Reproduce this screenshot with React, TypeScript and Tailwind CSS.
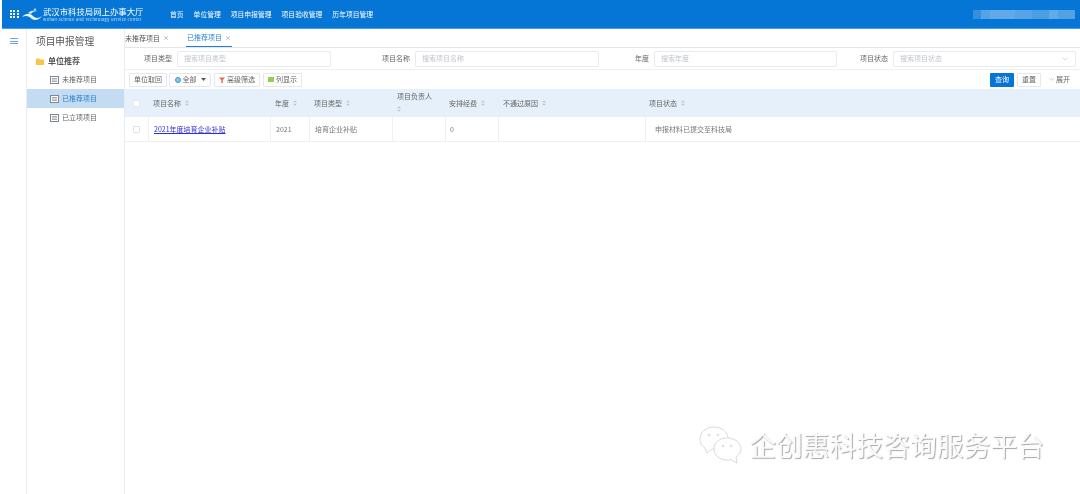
import { ChevronDown, X } from 'lucide-react'

const font = { fontFamily: '"Noto Sans CJK SC", "Liberation Sans", sans-serif' }

const nav = ['首页', '单位管理', '项目申报管理', '项目验收管理', '历年项目管理']
const filters = [
  { label: '项目类型', hint: '搜索项目类型', labelW: 'w-[47px]', inputW: 'w-[154px]' },
  { label: '项目名称', hint: '搜索项目名称', labelW: 'w-[79px]', inputW: 'w-[184px]' },
  { label: '年度', hint: '搜索年度', labelW: 'w-[50px]', inputW: 'w-[183px]' },
]
const columns = 'grid grid-cols-[23px_122px_39px_83px_53px_53px_147px_431px]'

function Sort() {
  return (
    <svg width="4" height="6" viewBox="0 0 5 7" className="ml-[4px] inline-block text-[#c0c7d0]">
      <path d="M2.5 0 L5 2.6 H0 Z M2.5 7 L0 4.4 H5 Z" fill="currentColor" />
    </svg>
  )
}

function DocIcon() {
  return (
    <svg width="9" height="8" viewBox="0 0 9 8" className="shrink-0">
      <rect x="0.5" y="0.5" width="8" height="7" fill="#fff" stroke="#7d8790" />
      <path d="M2 2.5H7M2 4H7M2 5.5H7" stroke="#8d969e" strokeWidth="0.8" />
    </svg>
  )
}

function WeChat() {
  return (
    <svg width="44" height="38" viewBox="0 0 44 38" fill="#fff" stroke="#cfcfcf" strokeWidth="0.8">
      <path d="M15 1C7 1 1 6 1 13c0 4 2 7 5 9l2 5 5-4c2 0 3 .3 5 0 2-4 7-8 12-8C29 6 23 1 15 1Z" />
      <path d="M28 12c-8 0-13 5-13 11s5 11 13 11c2 0 3 0 4-.5l6 3.500-1-6c3-2 5-5 5-8 0-6-6-11-14-11Z" />
      <circle cx="10" cy="9" r="1" fill="#fff" />
      <circle cx="19" cy="9" r="1" fill="#fff" />
      <circle cx="24" cy="20" r="0.900" fill="#fff" />
      <circle cx="32" cy="20" r="0.900" fill="#fff" />
    </svg>
  )
}

function Header() {
  return (
    <header className="flex h-[29px] shrink-0 items-center border-b border-[#4a9fe6] bg-[#0676d6] pl-[8px] text-white">
      <div className="grid w-[9px] grid-cols-3 gap-[1px]">
        {Array.from({ length: 9 }).map((_, i) => (
          <span key={i} className="h-[2px] w-[2px] bg-white" />
        ))}
      </div>
      <svg width="20" height="12" viewBox="0 0 20 12" className="ml-[3px]">
        <path d="M0 9C4 5 8 5 11 8c2 2 5 3 9 0-3 4-7 5-10 3C7 8 4 7 0 9Z" fill="#e8f3fc" />
        <path d="M6 5c3-3 6-3 10-2-3 0-6 1-7 3Z" fill="#cfe6f8" />
        <circle cx="13" cy="1.500" r="1" fill="#e8f3fc" />
      </svg>
      <div className="ml-[1px] flex w-[100px] flex-col leading-none">
        <span className="text-[8.400px] leading-[11px] whitespace-nowrap">武汉市科技局网上办事大厅</span>
        <span className="text-[3.800px] leading-[5px] tracking-[0.38px] whitespace-nowrap text-[#cfe4f7]">Wuhan Science and Technology Service Center</span>
      </div>
      <nav className="ml-[27px] flex gap-[10px] text-[6.800px] whitespace-nowrap">
        {nav.map((n) => (
          <span key={n}>{n}</span>
        ))}
      </nav>
      <div className="mr-[5px] ml-auto flex h-[9px] w-[102px] opacity-80">
        <span className="w-[8px] bg-[#3f97e2]" />
        <span className="w-[9px] bg-[#69ade8]" />
        <span className="w-[25px] bg-[#7ab8ec]" />
        <span className="w-[17px] bg-[#6cafe9]" />
        <span className="w-[17px] bg-[#5ea8e7]" />
        <span className="w-[9px] bg-[#7ab8ec]" />
        <span className="w-[17px] bg-[#66ace8]" />
      </div>
    </header>
  )
}

function Sidebar() {
  const items = ['未推荐项目', '已推荐项目', '已立项项目']
  return (
    <aside className="w-[98px] shrink-0 border-r border-[#e8edf2]">
      <div className="pt-[5px] pl-[9px] text-[9.700px] leading-[14px] text-[#555]">项目申报管理</div>
      <div className="mt-[6px] flex h-[14px] items-center gap-[4px] pl-[9px] text-[8px] font-bold text-[#555]">
        <svg width="8" height="7" viewBox="0 0 8 7">
          <path d="M0 1a.6.6 0 0 1 .6-.6H3L4 1.400h3.400A.6.6 0 0 1 8 2v4.400a.6.6 0 0 1-.6.6H.6A.6.6 0 0 1 0 6.400Z" fill="#f8c642" />
        </svg>
        单位推荐
      </div>
      <ul className="mt-[2px] text-[7px]">
        {items.map((t, i) => (
          <li
            key={t}
            className={`flex h-[19px] items-center gap-[3px] pl-[23px] ${i === 1 ? 'bg-[#c3dcf2] text-[#2a7fd0]' : 'text-[#666]'}`}
          >
            <DocIcon />
            {t}
          </li>
        ))}
      </ul>
    </aside>
  )
}

function Tabs() {
  return (
    <div className="flex h-[19px] items-center border-b border-[#e3e6ea] text-[7px]">
      <span className="flex h-full items-center gap-[3px] text-[#555]">
        未推荐项目 <X size={6} className="text-[#888]" />
      </span>
      <span className="ml-[17px] flex h-full items-center gap-[3px] border-b border-[#1f80d8] px-[1px] text-[#2a85d8]">
        已推荐项目 <X size={6} className="text-[#888]" />
      </span>
    </div>
  )
}

function Filters() {
  return (
    <div className="flex h-[22px] items-center border-b border-[#eef0f3] text-[7px] text-[#666]">
      {filters.map((f) => (
        <div key={f.label} className="flex items-center">
          <span className={`${f.labelW} text-right`}>{f.label}</span>
          <div className={`${f.inputW} ml-[5px] flex h-[16px] items-center rounded-[2px] border border-[#e8ebf0] pl-[6px] text-[#c0c4cc]`}>
            {f.hint}
          </div>
        </div>
      ))}
      <span className="w-[51px] text-right">项目状态</span>
      <div className="ml-[5px] flex h-[16px] w-[183px] items-center justify-between rounded-[2px] border border-[#e8ebf0] px-[6px] text-[#c0c4cc]">
        搜索项目状态
        <ChevronDown size={8} className="text-[#c2c6cc]" />
      </div>
    </div>
  )
}

function Toolbar() {
  const btn = 'flex h-[14px] items-center justify-center border border-[#e6e8ec] rounded-[1px]'
  return (
    <div className="flex h-[19px] items-center text-[7px] text-[#666]">
      <div className="ml-[4px] flex gap-[3px]">
        <span className={`${btn} mr-[-1px] w-[38px]`}>单位取回</span>
        <span className={`${btn} w-[42px] gap-[2px]`}>
          <span className="h-[6px] w-[6px] rounded-full border border-[#3a9ad9] bg-[#8cc6ea]" />
          全部
          <svg width="5" height="3" viewBox="0 0 5 3" className="ml-[2px]">
            <path d="M0 0H5L2.500 3Z" fill="#555" />
          </svg>
        </span>
        <span className={`${btn} w-[46px] gap-[2px]`}>
          <svg width="6" height="6" viewBox="0 0 6 6">
            <path d="M0 .5H6L3.800 3V6H2.400V3Z" fill="#e8683c" />
          </svg>
          高级筛选
        </span>
        <span className={`${btn} w-[39px] gap-[2px]`}>
          <span className="h-[5px] w-[6px] bg-[#8fd04f]" />
          列显示
        </span>
      </div>
      <div className="mr-[10px] ml-auto flex items-center gap-[3px]">
        <span className="flex h-[14px] w-[24px] items-center justify-center rounded-[1px] bg-[#0676d6] text-white">查询</span>
        <span className={`${btn} w-[24px]`}>重置</span>
        <span className="ml-[4px] flex items-center gap-[1px]">
          <ChevronDown size={7} className="text-[#aaa]" />
          展开
        </span>
      </div>
    </div>
  )
}

function Table() {
  const heads = ['项目名称', '年度', '项目类型']
  return (
    <div className="text-[7px] text-[#666]">
      <div className={`${columns} h-[28px] items-center bg-[#e5f0fa]`}>
        <span className="ml-[8px] h-[7px] w-[7px] rounded-[1px] border border-[#e4e8ee] bg-white" />
        {heads.map((h) => (
          <span key={h} className="flex items-center pl-[5px]">
            {h}
            <Sort />
          </span>
        ))}
        <span className="self-start pt-[1px] pl-[5px] leading-[12px]">
          项目负责人
          <br />
          <span className="-ml-[4px]">
            <Sort />
          </span>
        </span>
        <span className="flex items-center pl-[4px]">
          安排经费
          <Sort />
        </span>
        <span className="flex items-center pl-[5px]">
          不通过原因
          <Sort />
        </span>
        <span className="flex items-center pl-[4px]">
          项目状态
          <Sort />
        </span>
      </div>
      <div className={`${columns} h-[25px] items-stretch border-b border-[#eef0f3] text-[#777] [&>*]:flex [&>*]:items-center`}>
        <span className="pl-[8px]">
          <span className="h-[7px] w-[7px] rounded-[1px] border border-[#e0e3e8]" />
        </span>
        <span className="border-l border-[#eef0f3] pl-[5px] text-[#2f2fd8] underline">2021年度培育企业补贴</span>
        <span className="border-l border-[#eef0f3] pl-[5px]">2021</span>
        <span className="border-l border-[#eef0f3] pl-[5px]">培育企业补贴</span>
        <span className="border-l border-[#eef0f3]" />
        <span className="border-l border-[#eef0f3] pl-[4px]">0</span>
        <span className="border-l border-[#eef0f3]" />
        <span className="border-l border-[#eef0f3] pl-[9px]">申报材料已提交至科技局</span>
      </div>
    </div>
  )
}

export default function App() {
  return (
    <div style={font} className="relative flex h-[494px] w-[1080px] flex-col overflow-hidden bg-white pl-[2px] blur-[0.3px]">
      <Header />
      <div className="flex min-h-0 flex-1">
        <div className="flex w-[25px] shrink-0 justify-center border-r border-[#e8edf2] pt-[9px] pr-[1px]">
          <div className="flex h-[6px] w-[8px] flex-col justify-between">
            <span className="h-[1px] bg-[#6ea8de]" />
            <span className="h-[1px] bg-[#6ea8de]" />
            <span className="h-[1px] bg-[#6ea8de]" />
          </div>
        </div>
        <Sidebar />
        <main className="min-w-0 flex-1">
          <Tabs />
          <Filters />
          <Toolbar />
          <Table />
        </main>
      </div>
      <div className="absolute right-[36px] bottom-[30px] flex items-center gap-[6px]">
        <WeChat />
        <span className="text-[26.800px] leading-none whitespace-nowrap text-[#fafafa] [text-shadow:1px_1px_1px_#a8a8a8]">
          企创惠科技咨询服务平台
        </span>
      </div>
    </div>
  )
}
